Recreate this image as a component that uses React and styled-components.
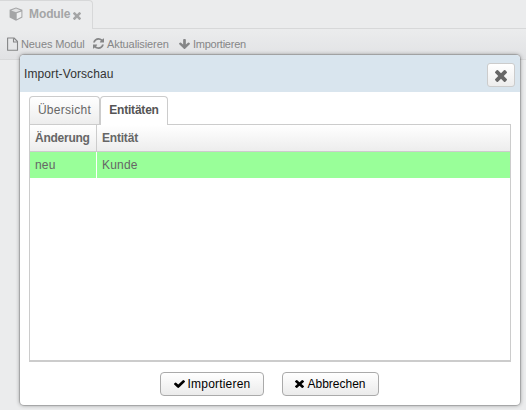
import React from 'react';
import styled, { createGlobalStyle } from 'styled-components';

const GlobalStyle = createGlobalStyle`
  * { box-sizing: border-box; }
  body { margin: 0; overflow: hidden; font-family: "Liberation Sans", Arial, sans-serif; }
`;

const Page = styled.main`
  position: relative;
  width: 526px;
  height: 410px;
  background: #ebeced;
  overflow: hidden;
`;

const ModuleTabs = styled.nav`
  display: flex;
  height: 29px;
  border-bottom: 1px solid #d7d8d9;
`;

const ModuleTab = styled.div`
  display: flex;
  align-items: center;
  width: 93px;
  height: 29px;
  padding: 0 0 2px 9px;
  border: 1px solid #d7d8d9;
  border-width: 1px 1px 0 0;
  border-radius: 0 4px 0 0;
  background: #ebeced;
  color: #a4a5a6;
  font-size: 12px;
  font-weight: bold;

  svg:last-child { margin: 4px 0 0 3px; }
`;

const ModuleName = styled.span`
  margin-left: 6px;
  letter-spacing: -0.1px;
`;

const Toolbar = styled.div`
  display: flex;
  height: 31px;
  padding: 0 0 1px 7px;
  border-bottom: 1px solid #d8d9da;
  background: linear-gradient(#ebeced, #e1e2e4);
`;

const ToolButton = styled.button`
  display: flex;
  align-items: center;
  flex: none;
  width: ${({ $width }) => $width}px;
  padding: 0;
  border: 0;
  background: none;
  color: #858687;
  font: 11px "Liberation Sans", Arial, sans-serif;
  letter-spacing: ${({ $spacing }) => $spacing || '0'};
  white-space: nowrap;

  svg { flex: none; margin-right: ${({ $gap }) => $gap}px; }
`;

const Dialog = styled.section`
  position: absolute;
  left: 20px;
  top: 55px;
  width: 500px;
  height: 350px;
  border-radius: 4px;
  background: #fff;
  box-shadow: 0 0 0 1px rgba(0, 0, 0, 0.13), 0 0 4px rgba(0, 0, 0, 0.45);
`;

const DialogHeader = styled.header`
  display: flex;
  align-items: center;
  justify-content: space-between;
  height: 37px;
  padding: 3px 5px 0 4px;
  border-radius: 4px 4px 0 0;
  background: #d9e5ee;
`;

const DialogTitle = styled.h1`
  margin: 0 0 2px;
  color: #333;
  font-size: 12px;
  font-weight: normal;
  letter-spacing: 0.1px;
`;

const CloseButton = styled.button`
  display: flex;
  align-items: center;
  justify-content: center;
  width: 28px;
  height: 24px;
  padding: 1px 0 0;
  border: 1px solid #ccc;
  border-radius: 3px;
  background: linear-gradient(#fff, #ededed);
  color: #666;
`;

const TabList = styled.div`
  display: flex;
  height: 32px;
  padding: 4px 0 0 9px;
`;

const Tab = styled.button`
  flex: none;
  position: relative;
  z-index: 1;
  width: ${({ $width }) => $width}px;
  height: ${({ $active }) => ($active ? 29 : 28)}px;
  padding: 0 0 ${({ $active }) => ($active ? 2 : 1)}px;
  border: 1px solid #ccc;
  border-bottom: 0;
  border-radius: 4px 4px 0 0;
  background: ${({ $active }) => ($active ? '#fff' : 'linear-gradient(#fff, #ededed)')};
  color: ${({ $active }) => ($active ? '#555' : '#666')};
  font: ${({ $active }) => ($active ? 'bold' : 'normal')} 12px "Liberation Sans", Arial, sans-serif;
  letter-spacing: ${({ $spacing }) => $spacing || '0'};
`;

const Table = styled.div`
  width: 482px;
  height: 238px;
  margin-left: 9px;
  border: 1px solid #ccc;
  border-bottom-width: 2px;
  color: #666;
  font-size: 12px;
`;

const Row = styled.div`
  display: grid;
  grid-template-columns: 67px 1fr;
  height: 26px;
  background: #9f9;
`;

const HeaderRow = styled(Row)`
  height: 27px;
  border-bottom: 1px solid #ccc;
  background: linear-gradient(#fff, #ededed);
  font-weight: bold;
`;

const Cell = styled.div`
  display: flex;
  align-items: center;
  padding: 0 0 0 5px;
  border-right: ${({ $divider }) => ($divider ? `1px solid ${$divider}` : '0')};
  letter-spacing: ${({ $spacing }) => $spacing || '0'};
`;

const Actions = styled.footer`
  display: flex;
  justify-content: center;
  gap: 18px;
  padding: 10px 1px 0 0;
`;

const ActionButton = styled.button`
  display: flex;
  align-items: center;
  justify-content: center;
  width: ${({ $width }) => $width}px;
  height: 24px;
  padding: 0;
  border: 1px solid #aaa;
  border-radius: 4px;
  background: linear-gradient(#fff, #ebebeb);
  color: #000;
  font: 12px "Liberation Sans", Arial, sans-serif;
  letter-spacing: ${({ $spacing }) => $spacing || '0'};

  svg { margin: 0 3px 0 0; }
`;

const glyphs = {
  times: 'M1490 1322q0 40-28 68l-136 136q-28 28-68 28t-68-28l-294-294-294 294q-28 28-68 28t-68-28l-136-136q-28-28-28-68t28-68l294-294-294-294q-28-28-28-68t28-68l136-136q28-28 68-28t68 28l294 294 294-294q28-28 68-28t68 28l136 136q28 28 28 68t-28 68l-294 294 294 294q28 28 28 68z',
  check: 'M1671 566q0 40-28 68l-724 724-136 136q-28 28-68 28t-68-28l-136-136-362-362q-28-28-28-68t28-68l136-136q28-28 68-28t68 28l294 295 656-657q28-28 68-28t68 28l136 136q28 28 28 68z',
  arrow: 'M1675 832q0 53-37 90l-651 652q-39 37-91 37-53 0-90-37l-651-652q-38-36-38-90 0-53 38-91l74-75q39-37 91-37 53 0 90 37l294 294v-704q0-52 38-90t90-38h128q52 0 90 38t38 90v704l294-294q37-37 90-37 52 0 91 37l75 75q37 39 37 91z',
  refresh: 'M1639 1056q0 5-1 7-64 268-268 434.5t-478 166.5q-146 0-282.5-55t-243.5-157l-129 129q-19 19-45 19t-45-19-19-45v-448q0-26 19-45t45-19h448q26 0 45 19t19 45-19 45l-137 137q71 66 161 102t187 36q134 0 250-65t186-179q11-17 53-117 8-23 30-23h192q13 0 22.5 9.5t9.5 22.5zm25-800v448q0 26-19 45t-45 19h-448q-26 0-45-19t-19-45 19-45l138-138q-148-137-349-137-134 0-250 65t-186 179q-11 17-53 117-8 23-30 23h-199q-13 0-22.5-9.5t-9.5-22.5v-7q65-268 270-434.5t480-166.5q146 0 284 55.5t245 156.5l130-129q19-19 45-19t45 19 19 45z',
};

const boxes = {
  times: '302 366 1188 1188',
  check: '121 334 1550 1188',
  arrow: '117 128 1558 1483',
  refresh: '128 128 1536 1536',
};

function Glyph({ name, width, height }) {
  return (
    <svg width={width} height={height} viewBox={boxes[name]} preserveAspectRatio="none" fill="currentColor" aria-hidden="true">
      <path d={glyphs[name]} />
    </svg>
  );
}

function CubeIcon() {
  return (
    <svg width="14" height="14" viewBox="0 0 14 14" aria-hidden="true">
      <path d="M7 .4 13.4 2.8v7.6L7 13.7.6 10.4V2.8z" fill="currentColor" />
      <path d="M7 1.6 11.9 3.4 7 5.2 2.1 3.4z" fill="#e0e1e2" />
      <path d="M7.7 6.3 12.4 4.5v5.3l-4.7 2.4z" fill="#eff0f1" />
    </svg>
  );
}

function FileIcon() {
  return (
    <svg width="12" height="14" viewBox="0 0 12 14" fill="none" stroke="currentColor" strokeLinejoin="round" aria-hidden="true">
      <path d="M.6 1H7L10.5 4.5V13.2H.6z" strokeWidth="1.1" />
      <path d="M6.5 1.2V5H10.4" strokeWidth="1.1" />
    </svg>
  );
}

export default function App() {
  return (
    <>
      <GlobalStyle />
      <Page>
        <ModuleTabs>
          <ModuleTab>
            <CubeIcon />
            <ModuleName>Module</ModuleName>
            <Glyph name="times" width={8} height={8} />
          </ModuleTab>
        </ModuleTabs>
        <Toolbar>
          <ToolButton $width={86} $gap={2} $spacing="-0.1px"><FileIcon />Neues Modul</ToolButton>
          <ToolButton $width={86} $gap={3} $spacing="-0.1px"><Glyph name="refresh" width={11} height={11} />Aktualisieren</ToolButton>
          <ToolButton $width={70} $gap={3} $spacing="-0.25px"><Glyph name="arrow" width={11} height={10} />Importieren</ToolButton>
        </Toolbar>
        <Dialog role="dialog" aria-label="Import-Vorschau">
          <DialogHeader>
            <DialogTitle>Import-Vorschau</DialogTitle>
            <CloseButton aria-label="Schließen"><Glyph name="times" width={12} height={12} /></CloseButton>
          </DialogHeader>
          <TabList>
            <Tab $width={71} $spacing="0.28px">Übersicht</Tab>
            <Tab $width={68} $spacing="-0.2px" $active>Entitäten</Tab>
          </TabList>
          <Table>
            <HeaderRow>
              <Cell $divider="#ccc" $spacing="-0.25px">Änderung</Cell>
              <Cell $spacing="-0.2px">Entität</Cell>
            </HeaderRow>
            <Row>
              <Cell $divider="#fff" $spacing="0.2px">neu</Cell>
              <Cell $spacing="0.2px">Kunde</Cell>
            </Row>
          </Table>
          <Actions>
            <ActionButton $width={104} $spacing="0.2px"><Glyph name="check" width={11} height={8} />Importieren</ActionButton>
            <ActionButton $width={97}><Glyph name="times" width={9} height={8} />Abbrechen</ActionButton>
          </Actions>
        </Dialog>
      </Page>
    </>
  );
}
